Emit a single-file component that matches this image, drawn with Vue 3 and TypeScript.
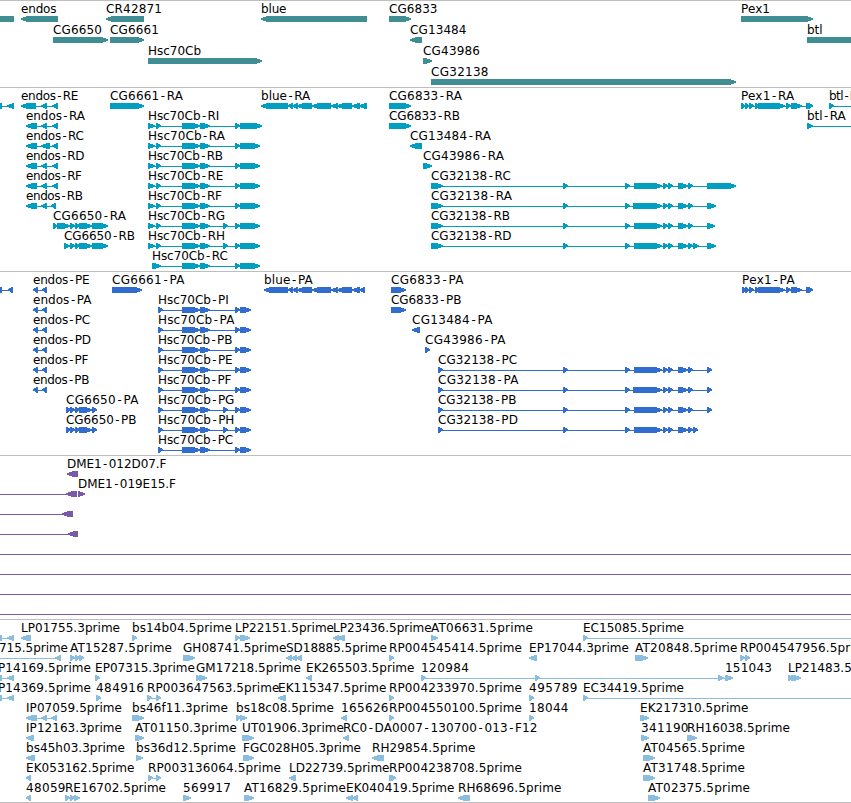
<script setup lang="ts">
import { computed, ref } from "vue";

type Block = [start: number, end: number];
type Strand = "<" | ">";
// lineFrom / lineTo: intron line that goes on past the first or last block
type Feature = [label: string, strand: Strand, blocks: Block[], lineFrom?: number, lineTo?: number];

interface Track {
  name: string;
  color: string;
  height: number;
  rowHeight: number;
  rows: Feature[][];
}

const viewWidth = ref<number>(851);
const barTop = 15;
const barHeight = 6;
const headLength = 6;

const endosR: Block[] = [[26, 37], [41, 47], [52, 58]];
const endosP: Block[] = [[33, 38], [42, 47]];
const hscMiddle: Block[] = [[182, 200], [200, 210]];
const pexTail: Block[] = [[745, 749], [749, 754], [755, 759], [758, 785], [786, 791], [791, 802], [806, 811], [808, 813]];
const blueMiddle: Block[] = [[288, 293], [292, 298], [297, 312], [312, 331], [331, 338], [337, 352], [352, 360]];

function hscR(end: number, extra = false): Block[] {
  return [[148, 155], [156, 161], ...hscMiddle, ...(extra ? [[223, 228] as Block] : []), [235, 240], [240, end]];
}

function hscP(extra = false): Block[] {
  return [[158, 163], ...hscMiddle, ...(extra ? [[223, 228] as Block] : []), [235, 240], [240, 251]];
}

function cg32138(first: Block, exon: number, last: Block[]): Block[] {
  return [first, [563, 568], [625, 630], [exon, 662], [663, 668], [668, 673], [678, 688], [688, 693], ...last];
}

const tracks = ref<Track[]>([
  {
    name: "gene",
    color: "#408e94",
    height: 86,
    rowHeight: 21,
    rows: [
      [
        ["", "<", [[-10, 14]]],
        ["endos", "<", [[21, 58]]],
        ["CR42871", "<", [[106, 144]]],
        ["blue", "<", [[261, 367]]],
        ["CG6833", ">", [[389, 411]]],
        ["Pex1", ">", [[741, 813]]],
      ],
      [
        ["CG6650", ">", [[53, 108]]],
        ["CG6661", ">", [[110, 144]]],
        ["CG13484", "<", [[410, 422]]],
        ["btl", ">", [[807, 870]]],
      ],
      [
        ["Hsc70Cb", ">", [[148, 262]]],
        ["CG43986", ">", [[423, 432]]],
      ],
      [["CG32138", ">", [[431, 736]]]],
    ],
  },
  {
    name: "transcript",
    color: "#009fc1",
    height: 183,
    rowHeight: 20,
    rows: [
      [
        ["", "<", [[-10, 2], [7, 14]]],
        ["endos-RE", "<", [[21, 36], [41, 47], [52, 58]]],
        ["CG6661-RA", ">", [[110, 144]]],
        ["blue-RA", "<", [[261, 288], ...blueMiddle, [359, 367]]],
        ["CG6833-RA", ">", [[389, 411]]],
        ["Pex1-RA", ">", [[741, 745], ...pexTail]],
        ["btl-RB", ">", [[829, 834]], 829, 870],
      ],
      [
        ["endos-RA", "<", endosR],
        ["Hsc70Cb-RI", ">", hscR(262)],
        ["CG6833-RB", ">", [[389, 411]]],
        ["btl-RA", ">", [[807, 813]], 807, 870],
      ],
      [
        ["endos-RC", "<", [[26, 37], [41, 50], [52, 58]]],
        ["Hsc70Cb-RA", ">", hscR(260)],
        ["CG13484-RA", "<", [[410, 422]]],
      ],
      [
        ["endos-RD", "<", endosR],
        ["Hsc70Cb-RB", ">", hscR(260)],
        ["CG43986-RA", ">", [[423, 432]]],
      ],
      [
        ["endos-RF", "<", endosR],
        ["Hsc70Cb-RE", ">", hscR(260)],
        ["CG32138-RC", ">", cg32138([431, 443], 634, [[707, 736]])],
      ],
      [
        ["endos-RB", "<", [[26, 37], [41, 47], [51, 56]]],
        ["Hsc70Cb-RF", ">", hscR(260)],
        ["CG32138-RA", ">", cg32138([431, 443], 633, [[707, 716]])],
      ],
      [
        ["CG6650-RA", ">", [[53, 57], [57, 70], [70, 75], [75, 80], [79, 92], [92, 108]]],
        ["Hsc70Cb-RG", ">", hscR(260, true)],
        ["CG32138-RB", ">", cg32138([431, 443], 634, [[707, 715]])],
      ],
      [
        ["CG6650-RB", ">", [[64, 70], [70, 75], [75, 80], [79, 92], [92, 108]]],
        ["Hsc70Cb-RH", ">", hscR(260, true)],
        ["CG32138-RD", ">", cg32138([431, 443], 634, [[693, 699], [707, 716]])],
      ],
      [["Hsc70Cb-RC", ">", [[152, 161], ...hscMiddle, [235, 240], [240, 260]]]],
    ],
  },
  {
    name: "cds",
    color: "#316dce",
    height: 183,
    rowHeight: 20,
    rows: [
      [
        ["", "<", [[-10, 2], [8, 13]]],
        ["endos-PE", "<", endosP],
        ["CG6661-PA", ">", [[112, 142]]],
        ["blue-PA", "<", [[264, 288], ...blueMiddle, [359, 365]]],
        ["CG6833-PA", ">", [[391, 406]]],
        ["Pex1-PA", ">", [[742, 746], ...pexTail]],
      ],
      [
        ["endos-PA", "<", endosP],
        ["Hsc70Cb-PI", ">", hscP()],
        ["CG6833-PB", ">", [[391, 406]]],
      ],
      [
        ["endos-PC", "<", endosP],
        ["Hsc70Cb-PA", ">", hscP()],
        ["CG13484-PA", "<", [[412, 420]]],
      ],
      [
        ["endos-PD", "<", endosP],
        ["Hsc70Cb-PB", ">", hscP()],
        ["CG43986-PA", ">", [[425, 430]]],
      ],
      [
        ["endos-PF", "<", endosP],
        ["Hsc70Cb-PE", ">", hscP()],
        ["CG32138-PC", ">", cg32138([438, 443], 634, [[707, 712]])],
      ],
      [
        ["endos-PB", "<", endosP],
        ["Hsc70Cb-PF", ">", hscP()],
        ["CG32138-PA", ">", cg32138([438, 443], 633, [[707, 712]])],
      ],
      [
        ["CG6650-PA", ">", [[66, 71], [70, 75], [75, 80], [79, 92], [92, 97]]],
        ["Hsc70Cb-PG", ">", hscP(true)],
        ["CG32138-PB", ">", cg32138([438, 443], 634, [[707, 712]])],
      ],
      [
        ["CG6650-PB", ">", [[66, 71], [70, 75], [75, 80], [79, 92], [92, 97]]],
        ["Hsc70Cb-PH", ">", hscP(true)],
        ["CG32138-PD", ">", cg32138([438, 443], 634, [[693, 698]])],
      ],
      [["Hsc70Cb-PC", ">", hscP()]],
    ],
  },
  {
    name: "bac",
    color: "#775ba8",
    height: 163,
    rowHeight: 20,
    rows: [
      [["DME1-012D07.F", "<", [[67, 78]]]],
      [
        ["", "<", [[66, 77]], -5, 66],
        ["DME1-019E15.F", ">", [[78, 85]]],
      ],
      [["", "<", [[62, 73]], -5, 62]],
      [["", "<", [[68, 78]], -5, 68]],
      [["", ">", [], -5, 870]],
      [["", ">", [], -5, 870]],
      [["", ">", [], -5, 870]],
      [["", ">", [], -5, 870]],
    ],
  },
  {
    name: "est",
    color: "#8abee0",
    height: 182,
    rowHeight: 20,
    rows: [
      [
        ["", "<", [[-10, 2], [7, 14]]],
        ["LP01755.3prime", "<", [[21, 31]]],
        ["bs14b04.5prime", ">", [[132, 137]]],
        ["LP22151.5prime", ">", [[235, 240], [240, 250]]],
        ["LP23436.5prime", "<", [[333, 339], [337, 345]]],
        ["AT06631.5prime", ">", [[431, 438]]],
        ["EC15085.5prime", ">", [[583, 588]], 583, 870],
      ],
      [
        ["715.5prime", "<", [[55, 61]], -1, 61],
        ["AT15287.5prime", ">", [[70, 75], [75, 80], [79, 84]]],
        ["GH08741.5prime", ">", [[183, 195]]],
        ["SD18885.5prime", "<", [[286, 292], [291, 297], [296, 302]]],
        ["RP004545414.5prime", ">", [[389, 394]]],
        ["EP17044.3prime", "<", [[529, 537]]],
        ["AT20848.5prime", ">", [[635, 648]]],
        ["RP004547956.5prime", ">", [[740, 745], [745, 750]]],
      ],
      [
        ["P14169.5prime", "<", [[-2, 2], [7, 14]]],
        ["EP07315.3prime", ">", [[95, 100]]],
        ["GM17218.5prime", ">", [[196, 201], [199, 207]]],
        ["EK265503.5prime", "<", [[306, 312]]],
        ["120984", ">", [[421, 426], [535, 540], [718, 724]], 421, 727],
        ["151043", ">", [[725, 733]]],
        ["LP21483.5prime", ">", [[788, 792], [791, 801]]],
      ],
      [
        ["P14369.5prime", "<", [[-2, 2], [7, 14]]],
        ["484916", ">", [[96, 101]]],
        ["RP003647563.5prime", ">", [[147, 152], [156, 161]]],
        ["EK115347.5prime", "<", [[278, 286]]],
        ["RP004233970.5prime", ">", [[389, 394]]],
        ["495789", ">", [[529, 534]]],
        ["EC34419.5prime", ">", [[583, 588]], 583, 870],
      ],
      [
        ["IP07059.5prime", "<", [[26, 37], [41, 47], [51, 57]]],
        ["bs46f11.3prime", ">", [[132, 144]]],
        ["bs18c08.5prime", ">", [[236, 241], [240, 247]]],
        ["165626", "<", [[341, 347]]],
        ["RP004550100.5prime", ">", [[389, 394]]],
        ["18044", ">", [[529, 534]]],
        ["EK217310.5prime", ">", [[640, 649]]],
      ],
      [
        ["IP12163.3prime", "<", [[26, 34]]],
        ["AT01150.3prime", ">", [[135, 144]]],
        ["UT01906.3prime", ">", [[242, 254]]],
        ["RC0-DA0007-130700-013-F12", "<", [[343, 349]]],
        ["341190", ">", [[641, 649]]],
        ["RH16038.5prime", ">", [[687, 697]]],
      ],
      [
        ["bs45h03.3prime", "<", [[26, 35]]],
        ["bs36d12.5prime", ">", [[136, 143]]],
        ["FGC028H05.3prime", ">", [[243, 254]]],
        ["RH29854.5prime", "<", [[372, 384]]],
        ["AT04565.5prime", ">", [[643, 655]]],
      ],
      [
        ["EK053162.5prime", "<", [[26, 31]]],
        ["RP003136064.5prime", ">", [[148, 153], [156, 161]]],
        ["LD22739.5prime", "<", [[289, 295], [291, 296]]],
        ["RP004238708.5prime", ">", [[389, 394], [391, 396]]],
        ["AT31748.5prime", ">", [[643, 655]]],
      ],
      [
        ["48059", "<", [[26, 31]]],
        ["RE16702.5prime", ">", [[65, 70], [70, 75], [74, 80]]],
        ["569917", ">", [[183, 191]]],
        ["AT16829.5prime", ">", [[244, 254]]],
        ["EK040419.5prime", "<", [[346, 353], [352, 358]]],
        ["RH68696.5prime", "<", [[458, 470]]],
        ["AT02375.5prime", ">", [[648, 660]]],
      ],
    ],
  },
]);

// Label widths: whole labels first, isoform labels are stem + last letter
const labelWidths: Record<string, number> = {
  "endos": 35.5, "CR42871": 56, "blue": 25.5, "CG6833": 48.5, "Pex1": 29, "CG6650": 49, "CG6661": 49,
  "CG13484": 56.5, "btl": 15.5, "Hsc70Cb": 53, "CG43986": 57, "CG32138": 57.5,
  "DME1-012D07.F": 99.5, "DME1-019E15.F": 98,
  "LP01755.3prime": 99, "bs14b04.5prime": 100, "LP22151.5prime": 99, "LP23436.5prime": 98.7,
  "AT06631.5prime": 102, "EC15085.5prime": 101, "715.5prime": 69, "AT15287.5prime": 102,
  "GH08741.5prime": 103.5, "SD18885.5prime": 101, "RP004545414.5prime": 133, "EP17044.3prime": 100,
  "AT20848.5prime": 102.5, "RP004547956.5prime": 133, "P14169.5prime": 93, "EP07315.3prime": 100,
  "GM17218.5prime": 105, "EK265503.5prime": 108.5, "120984": 48, "151043": 47, "LP21483.5prime": 99,
  "P14369.5prime": 93, "484916": 48, "RP003647563.5prime": 132.5, "EK115347.5prime": 108.5,
  "RP004233970.5prime": 133, "495789": 48.5, "EC34419.5prime": 101, "IP07059.5prime": 96,
  "bs46f11.3prime": 96, "bs18c08.5prime": 98, "165626": 47.5, "RP004550100.5prime": 133, "18044": 39.5,
  "EK217310.5prime": 108.5, "IP12163.3prime": 96, "AT01150.3prime": 102, "UT01906.3prime": 102,
  "RC0-DA0007-130700-013-F12": 194.5, "341190": 47.5, "RH16038.5prime": 103, "bs45h03.3prime": 99,
  "bs36d12.5prime": 100, "FGC028H05.3prime": 118, "RH29854.5prime": 103.5, "AT04565.5prime": 102,
  "EK053162.5prime": 108.5, "RP003136064.5prime": 133, "LD22739.5prime": 100.5,
  "RP004238708.5prime": 133, "AT31748.5prime": 102, "48059": 39.5, "RE16702.5prime": 101, "569917": 48,
  "AT16829.5prime": 102, "EK040419.5prime": 108.5, "RH68696.5prime": 103.5, "AT02375.5prime": 102,
};
const stemWidths: Record<string, number> = {
  endos: 59, CG6661: 73, CG6833: 73, CG6650: 73, Hsc70Cb: 77, blue: 49.3, CG13484: 81, CG43986: 81, CG32138: 81,
  Pex1: 53.2, btl: 38.8,
};
const letterOffsets: Record<string, number> = { A: 0, B: -2, C: -1.2, D: -0.5, E: -1.7, F: -3, G: 0, H: 0, I: -5.7 };

function labelWidth(label: string): number | undefined {
  if (label in labelWidths) return labelWidths[label];
  const [stem, isoform] = label.split("-") as [string, string];
  if (!isoform || !(stem in stemWidths)) return undefined;
  return (stemWidths[stem] as number) + (letterOffsets[isoform.charAt(1)] ?? 0) - (isoform.startsWith("P") ? 0.6 : 0);
}

// One arrow-headed block; narrow blocks become triangles
function arrowPath([start, end]: Block, strand: Strand): string {
  const head = Math.min(headLength, end - start - 1);
  const mid = barTop + barHeight / 2;
  const bottom = barTop + barHeight;
  if (strand === ">") {
    return `M${start} ${barTop}H${end - head}L${end + 0.4} ${mid - 0.6}V${mid + 0.3}L${end - head} ${bottom}H${start}Z`;
  }
  return `M${end} ${barTop}H${start + head}L${start - 0.4} ${mid - 0.6}V${mid + 0.3}L${start + head} ${bottom}H${end}Z`;
}

const drawnTracks = computed(() =>
  tracks.value.map((track) => ({
    ...track,
    rows: track.rows.map((row) =>
      row.map(([label, strand, blocks, lineFrom, lineTo]) => {
        const from = lineFrom ?? blocks[0]?.[0] ?? 0;
        const to = lineTo ?? blocks.at(-1)?.[1] ?? from;
        return {
          label,
          parts: label.split(/(-)/),
          width: labelWidth(label),
          from,
          to,
          hasLine: blocks.length !== 1 || lineTo !== undefined,
          path: blocks.map((block) => arrowPath(block, strand)).join(""),
        };
      })
    ),
  }))
);
</script>

<template>
  <main class="browser">
    <section v-for="track of drawnTracks" :key="track.name" class="track">
      <svg :width="viewWidth" :height="track.height" :fill="track.color">
        <g v-for="(row, index) of track.rows" :key="index" :transform="`translate(0 ${index * track.rowHeight})`">
          <g v-for="(feature, i) of row" :key="i">
            <rect v-if="feature.hasLine" class="shape" :x="feature.from" y="18" :width="feature.to - feature.from" height="1" />
            <path class="shape" :d="feature.path" />
            <text v-if="feature.label" :x="feature.from" y="12" :textLength="feature.width"><tspan v-for="(part, p) of feature.parts" :key="p" :class="{ hyphen: part === '-' }">{{ part }}</tspan></text>
          </g>
        </g>
      </svg>
    </section>
  </main>
</template>

<style scoped>
.browser {
  width: 851px;
  height: 803px;
  overflow: hidden;
  background: #fff;
}

.track {
  border-top: 1px solid #bebebe;

  &:last-child {
    border-bottom: 1px solid #bebebe;
  }

  &>svg {
    display: block;
    overflow: hidden;
  }
}

.shape {
  shape-rendering: crispEdges;
}

text {
  font: 12px "DejaVu Sans", sans-serif;
  fill: #000;
}

.hyphen {
  font-family: "DejaVu Sans Mono", monospace;
}
</style>
